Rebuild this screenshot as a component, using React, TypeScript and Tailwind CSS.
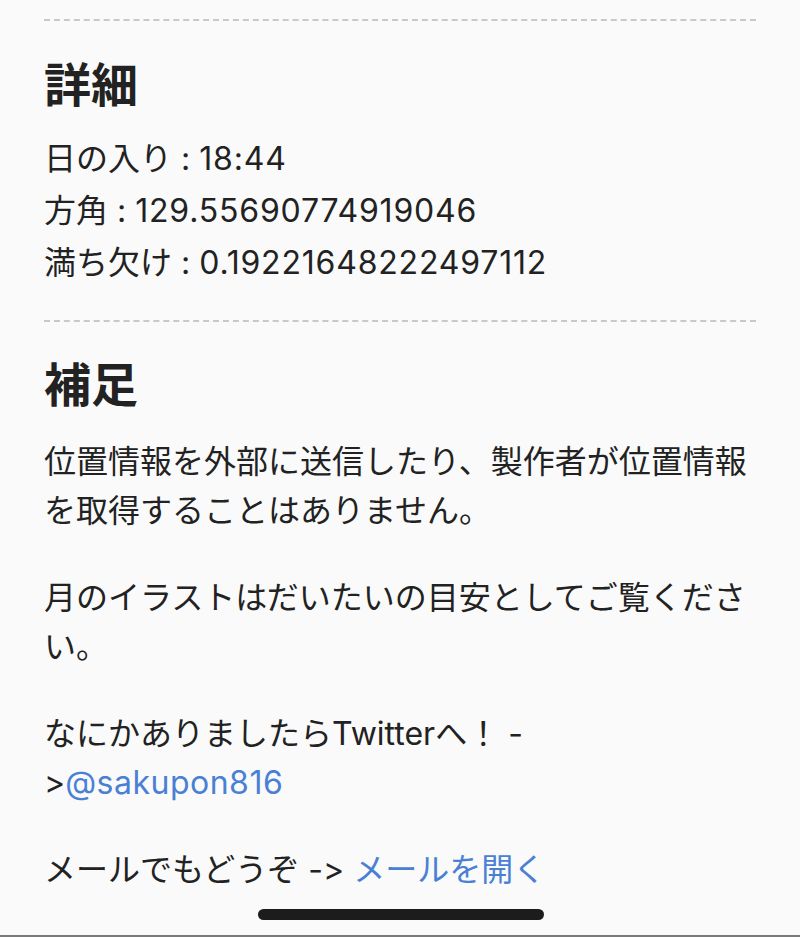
import React from 'react';

const font = { fontFamily: 'Inter, "Noto Sans CJK JP", sans-serif' };

const Divider = () => <div className="border-t-2 border-dashed border-[#c9c9c9]" />;

const Num = ({ children }: { children: React.ReactNode }) => (
  <span className="tracking-[0.8px]">{children}</span>
);

const App: React.FC = () => {
  return (
    <div
      className="relative w-[800px] h-[937px] overflow-hidden bg-[#fafafa] px-[44px] text-[#222222] [font-feature-settings:'calt'_0,'liga'_0]"
      style={font}
    >
      <div className="pt-[19px]">
        <Divider />
      </div>

      <h2 className="mt-[36px] text-[47px] font-bold leading-[56px]">詳細</h2>
      <div className="mt-[20px] text-[32px] leading-[52px]">
        <p>
          日の入り : <Num>18:44</Num>
        </p>
        <p>
          方角 : <Num>129.55690774919046</Num>
        </p>
        <p>
          満ち欠け : <Num>0.19221648222497112</Num>
        </p>
      </div>

      <div className="mt-[31px]">
        <Divider />
      </div>

      <h2 className="mt-[35px] text-[47px] font-bold leading-[56px]">補足</h2>
      <div className="mt-[24px] flex flex-col gap-[38px] text-[32px] leading-[49px]">
        <p>位置情報を外部に送信したり、製作者が位置情報を取得することはありません。</p>
        <p>月のイラストはだいたいの目安としてご覧ください。</p>
        <p>
          なにかありましたらTwitterへ！ -
          <br />
          &gt;
          <a href="#" className="text-[#4a80d4] tracking-[0.5px]">
            @sakupon816
          </a>
        </p>
        <p>
          メールでもどうぞ -&gt;{' '}
          <a href="#" className="text-[#4a80d4]">
            メールを開く
          </a>
        </p>
      </div>

      {/* home indicator */}
      <div className="absolute left-[258px] top-[909px] h-[11px] w-[286px] rounded-full bg-[#1c1c1c]" />
      <div className="absolute bottom-0 left-0 h-[2px] w-full bg-[#7a7a7a]" />
    </div>
  );
};

export default App;
